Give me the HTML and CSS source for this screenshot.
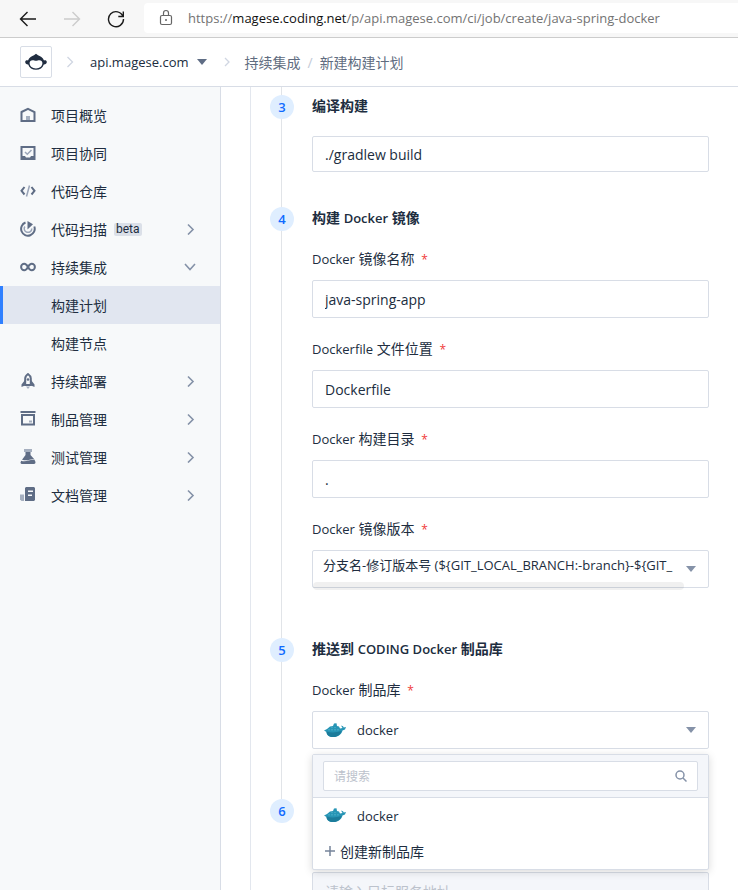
FILE: index.html
```html
<!DOCTYPE html>
<html lang="zh-CN">
<head>
    <meta charset="UTF-8">
    <meta name="viewport" content="width=device-width, initial-scale=1.0">
    <title>新建构建计划</title>

    <link rel="stylesheet" href="styles.css">
</head>
<body>

    <div class="browser-bar">
        <button class="browser-btn" aria-label="后退">
            <svg width="18" height="18" viewBox="0 0 18 18"><path d="M17 9H1.500M8.500 2L1.500 9l7 7"/></svg>
        </button>
        <button class="browser-btn forward" aria-label="前进" disabled>
            <svg width="18" height="18" viewBox="0 0 18 18"><path d="M1 9h15.500M9.500 2l7 7-7 7"/></svg>
        </button>
        <button class="browser-btn reload" aria-label="刷新">
            <svg width="18" height="18" viewBox="0 0 18 18"><path d="M16 6.500A7.500 7.500 0 1 0 16.500 9M16.300 1.500v5h-5"/></svg>
        </button>
        <div class="address">
            <svg width="14" height="18" viewBox="0 0 14 18"><rect x="1.500" y="6.500" width="11" height="9" rx="1.500"/><path d="M4.500 6.500V4a2.500 2.500 0 0 1 5 0v2.500"/><circle class="dot" cx="7" cy="11" r="1"/></svg>
            <span class="url">https://<b>magese.coding.net</b>/p/api.magese.com/ci/job/create/java-spring-docker</span>
        </div>
    </div>

    <header class="top-nav">
        <a href="#" class="logo" aria-label="CODING">
            <svg width="24" height="18" viewBox="0 0 24 18">
                <path class="logo-dark" d="M4 7.500C5 4.500 8 3.200 10 2.300L12 .8l2 1.500c2 .9 5 2.200 6 5.200 1.500-.5 2.800.2 2.800 1.500 0 1.600-1.300 2.600-3 2.500-1 3.500-4 5.300-7.800 5.300S5.200 15 4.200 11.500c-1.700.1-3-.9-3-2.500 0-1.300 1.300-2 2.800-1.500z"/>
                <path class="logo-light" d="M5.600 10c0-1.700 1.200-2.800 3-2.800 1.300 0 2.200.6 3.400.6s2.100-.6 3.400-.6c1.800 0 3 1.100 3 2.800 0 3.300-2.800 5.400-6.400 5.400S5.600 13.300 5.600 10z"/>
            </svg>
        </a>
        <svg class="crumb-arrow" width="8" height="12" viewBox="0 0 8 12"><path d="M1.500 1l5 5-5 5"/></svg>
        <button class="project-btn">api.magese.com
            <svg width="10" height="6" viewBox="0 0 10 6"><path d="M0 0h10L5 6z"/></svg>
        </button>
        <svg class="crumb-arrow second" width="6" height="10" viewBox="0 0 6 10"><path d="M1 1l4 4-4 4"/></svg>
        <nav class="crumbs">
            <a href="#">持续集成</a><i>/</i><a href="#">新建构建计划</a>
        </nav>
    </header>

    <div class="page">
        <nav class="sidebar">
            <a href="#" class="menu-item">
                <svg class="icon" viewBox="0 0 16 16"><path class="line" d="M1.500 5L8 1.800 14.500 5v9h-13z"/><path class="pale" d="M6 9h4v4H6z"/></svg>
                项目概览
            </a>
            <a href="#" class="menu-item">
                <svg class="icon" viewBox="0 0 16 16"><path class="line" d="M1.500 2h13v12h-13z"/><path d="M1 11h4l1 1.500h4l1-1.500h4v4H1z"/><path class="line thin" d="M5 7l2.300 2.300L11.500 5"/></svg>
                项目协同
            </a>
            <a href="#" class="menu-item">
                <svg class="icon" viewBox="0 0 16 16"><path class="line" d="M4.500 4L1.500 7.800l3 3.700M11.500 4l3 3.800-3 3.700"/><path class="line thin" d="M9.500 2.500l-3 11"/></svg>
                代码仓库
            </a>
            <a href="#" class="menu-item">
                <svg class="icon" viewBox="0 0 16 16"><path class="line" d="M5.500 1.500A6.800 6.800 0 1 0 14.300 5.500"/><path class="line thin" d="M4.800 5.500a3.800 3.800 0 1 0 7 2"/><path d="M7.500 0L13 3.200 7.500 8.500z"/></svg>
                代码扫描 <span class="beta">beta</span>
                <svg class="arrow" viewBox="0 0 12 12"><path d="M4 1.500L9 6.500l-5 5"/></svg>
            </a>
            <a href="#" class="menu-item">
                <svg class="icon" viewBox="0 0 16 16"><path class="line" d="M8 8C6.800 5.800 5.800 4.800 4.300 4.800a3.200 3.200 0 0 0 0 6.400C5.800 11.200 6.800 10.200 8 8s2.200-3.200 3.700-3.200a3.200 3.200 0 0 1 0 6.400C10.200 11.200 9.200 10.200 8 8z"/></svg>
                持续集成
                <svg class="arrow open" viewBox="0 0 12 12"><path d="M1 3l5 5.500L11 3"/></svg>
            </a>
            <a href="#" class="menu-item sub active">构建计划</a>
            <a href="#" class="menu-item sub">构建节点</a>
            <a href="#" class="menu-item">
                <svg class="icon" viewBox="0 0 16 16"><path class="line" d="M5.200 12V5.500C5.200 3.500 6.500 2 8 1c1.500 1 2.800 2.500 2.800 4.500V12z"/><path d="M5 7l-3.500 4.500V14L5 12.500zM11 7l3.500 4.500V14L11 12.500z"/><circle cx="8" cy="6.500" r="1.300"/><path class="pale" d="M6 13.500h4L8 16z"/></svg>
                持续部署
                <svg class="arrow" viewBox="0 0 12 12"><path d="M4 1.500L9 6.500l-5 5"/></svg>
            </a>
            <a href="#" class="menu-item">
                <svg class="icon" viewBox="0 0 16 16"><path d="M.5 0h15v2H.5z"/><path class="line" d="M2 4h12v9.500H2z"/><path class="pale" d="M9 9.500h3v2H9z"/></svg>
                制品管理
                <svg class="arrow" viewBox="0 0 12 12"><path d="M4 1.500L9 6.500l-5 5"/></svg>
            </a>
            <a href="#" class="menu-item">
                <svg class="icon" viewBox="0 0 16 16"><path class="pale" d="M4 0h8v3H4z"/><path d="M5.500 3h5v3l4 4.500c-4-1.200-6 2-12.500.2L5.500 6z"/><path d="M1.200 11.800c5 1.700 8-1.500 13.300-1l1 2.200c0 1.200-.5 2-1.500 2H2.500C1.500 15 .5 14.500.5 13.500z"/></svg>
                测试管理
                <svg class="arrow" viewBox="0 0 12 12"><path d="M4 1.500L9 6.500l-5 5"/></svg>
            </a>
            <a href="#" class="menu-item">
                <svg class="icon" viewBox="0 0 16 16"><path class="pale" d="M0 7.500h4V14H1.500L0 12.500z"/><path fill-rule="evenodd" d="M6 0h8l1 1v12l-1 1H5V1zM8 3.500V5h5V3.500zM8 7.500V9h4V7.500z"/></svg>
                文档管理
                <svg class="arrow" viewBox="0 0 12 12"><path d="M4 1.500L9 6.500l-5 5"/></svg>
            </a>
        </nav>

        <main class="content">
            <form class="steps">
                <section class="step">
                    <span class="num">3</span>
                    <h3>编译构建</h3>
                    <div class="field">
                        <input type="text" class="command" aria-label="编译构建" value="./gradlew build">
                    </div>
                </section>

                <section class="step">
                    <span class="num">4</span>
                    <h3>构建 <span class="en">Docker</span> 镜像</h3>
                    <div class="field">
                        <label for="imageName"><span class="en">Docker</span> 镜像名称 <em>*</em></label>
                        <input type="text" id="imageName" value="java-spring-app">
                    </div>
                    <div class="field">
                        <label for="dockerfile"><span class="en">Dockerfile</span> 文件位置 <em>*</em></label>
                        <input type="text" id="dockerfile" value="Dockerfile">
                    </div>
                    <div class="field">
                        <label for="buildDir"><span class="en">Docker</span> 构建目录 <em>*</em></label>
                        <input type="text" id="buildDir" value=".">
                    </div>
                    <div class="field">
                        <label for="version"><span class="en">Docker</span> 镜像版本 <em>*</em></label>
                        <div class="select-box scroll">
                            <select id="version">
                                <option>分支名-修订版本号 (${GIT_LOCAL_BRANCH:-branch}-${GIT_</option>
                            </select>
                            <svg class="caret" viewBox="0 0 10 6"><path d="M0 0h10L5 6z"/></svg>
                        </div>
                    </div>
                </section>

                <section class="step">
                    <span class="num">5</span>
                    <h3>推送到 <span class="en">CODING Docker</span> 制品库</h3>
                    <div class="field">
                        <label for="repo"><span class="en">Docker</span> 制品库 <em>*</em></label>
                        <div class="select-box">
                            <button type="button" id="repo" class="repo-btn" aria-haspopup="listbox" aria-expanded="true">
                                <svg class="whale" viewBox="0 0 22 15"><use href="#whale"/></svg>
                                docker
                            </button>
                            <svg class="caret" viewBox="0 0 10 6"><path d="M0 0h10L5 6z"/></svg>
                            <div class="dropdown">
                                <div class="search">
                                    <input type="text" placeholder="请搜索" aria-label="请搜索">
                                    <svg width="12" height="12" viewBox="0 0 12 12"><circle cx="5" cy="5" r="4"/><path d="M8 8l3.500 3.500"/></svg>
                                </div>
                                <button type="button" class="option">
                                    <svg class="whale" viewBox="0 0 22 15"><use href="#whale"/></svg>
                                    docker
                                </button>
                                <button type="button" class="option create">
                                    <svg class="plus" viewBox="0 0 12 12"><path d="M6 1v10M1 6h10"/></svg>
                                    创建新制品库
                                </button>
                            </div>
                        </div>
                    </div>
                </section>

                <section class="step covered">
                    <span class="num">6</span>
                    <div class="field">
                        <input type="text" aria-label="目标服务地址" placeholder="请输入目标服务地址" disabled>
                    </div>
                </section>
            </form>
        </main>
    </div>

    <svg class="defs" width="0" height="0">
        <symbol id="whale" viewBox="0 0 22 15">
            <path fill="#2795b5" d="M0 7.500l3-1.500 3-2.500 3-.5 1-2.500 2.500-.3L13 3l2 .5 1 2 2.500-.5L17 2.500l2 .8.800 1.200 2.200-.5-1 2.500-2.500 1C17.500 11.500 14 14 9.500 14 5 14 2.500 12 2.500 9z"/>
            <path fill="#1c7c9b" d="M2.500 8.500c5 1.500 10 1 15-.5-1 3.500-4 6-8 6-4.500 0-7-2-7-5.500z"/>
            <path fill="#3fa6c2" d="M4 6h2v1.500H4zM7 6h2v1.500H7zM10 6h2v1.500h-2zM7 4h2v1H7zM10 4h2v1h-2zM13 6h2v1.500h-2z"/>
        </symbol>
    </svg>

</body>
</html>
```
FILE: styles.css
```css
* {
    box-sizing: border-box;
}

body {
    margin: 0;
    height: 100vh;
    display: flex;
    flex-direction: column;
    overflow: hidden;
    background-color: #fff;
    color: #202d40;
    font-family: "Open Sans", "Noto Sans CJK SC", sans-serif;
    font-size: 14px;
}

a {
    color: inherit;
    text-decoration: none;
}

button, input, select {
    font-family: inherit;
    font-size: 14px;
    color: inherit;
}

button {
    border: none;
    padding: 0;
    background: none;
}

svg {
    flex: none;
}

.defs {
    position: absolute;
}

/* browser */
.browser-bar {
    flex: none;
    display: flex;
    align-items: center;
    height: 38px;
    padding-left: 19px;
    background-color: #f7f7f7;
    border-bottom: 1px solid #ccc;
}

.browser-btn {
    display: flex;
    margin-right: 26px;
}

.browser-btn.reload {
    margin-right: 19px;
}

.browser-btn svg, .address svg {
    fill: none;
    stroke: #1b1b1b;
    stroke-width: 1.4;
}

.browser-btn.forward svg {
    stroke: #ccc;
}

.address {
    flex: 1;
    display: flex;
    align-items: center;
    gap: 15px;
    height: 30px;
    padding-left: 15px;
    margin-bottom: 1px;
    background-color: #fff;
    border-radius: 4px 0 0 4px;
}

.address svg {
    stroke: #666;
    stroke-width: 1.2;
}

.address .dot {
    fill: #666;
    stroke: none;
}

.url {
    font-size: 13px;
    color: #737373;
    white-space: nowrap;
}

.url b {
    font-weight: normal;
    color: #111;
}

/* top nav */
.top-nav {
    flex: none;
    display: flex;
    align-items: center;
    height: 49px;
    padding-left: 20px;
    border-bottom: 1px solid #d8dde6;
}

.logo {
    display: flex;
    align-items: center;
    justify-content: center;
    width: 32px;
    height: 32px;
    border: 1px solid #d8dde6;
    border-radius: 2px;
}

.logo-dark {
    fill: #202d40;
}

.logo-light {
    fill: #fff;
}

.crumb-arrow {
    margin: 0 16px 0 14px;
    fill: none;
    stroke: #d0d6e2;
    stroke-width: 1.3;
}

.crumb-arrow.second {
    margin: 0 14px 0 17px;
}

.project-btn {
    display: flex;
    align-items: center;
    gap: 9px;
    font-size: 13px;
}

.project-btn svg {
    fill: #5f6d85;
}

.crumbs {
    color: #606c80;
}

.crumbs i {
    margin: 0 7px;
    font-style: normal;
    color: #c4cbd8;
}

.page {
    flex: 1;
    display: flex;
    min-height: 0;
}

/* sidebar */
.sidebar {
    flex: none;
    width: 221px;
    padding-top: 9px;
    background-color: #f7f9fa;
    border-right: 1px solid #d8dde6;
}

.menu-item {
    display: flex;
    align-items: center;
    height: 38px;
    padding: 0 24px 0 20px;
}

.menu-item.sub {
    padding-left: 51px;
}

.menu-item.active {
    padding-left: 48px;
    border-left: 3px solid #2f80ff;
    background-color: #e1e6f0;
}

.icon {
    width: 16px;
    height: 16px;
    margin-right: 15px;
    fill: #5f6d85;
}

.icon .line {
    fill: none;
    stroke: #5f6d85;
    stroke-width: 2;
}

.icon .thin {
    stroke: #9aa5b8;
    stroke-width: 1.5;
}

.icon .pale {
    fill: #a5afbf;
}

.beta {
    margin-left: 7px;
    padding: 0 2px;
    border-radius: 2px;
    background-color: #dbe0e8;
    font-family: Roboto, sans-serif;
    font-size: 12px;
    line-height: 13px;
}

.arrow {
    width: 12px;
    height: 12px;
    margin-left: auto;
    fill: none;
    stroke: #8592a8;
    stroke-width: 1.6;
}

/* steps */
.content {
    flex: 1;
    min-width: 0;
    padding-left: 29px;
    overflow: hidden;
}

.steps {
    padding: 7px 29px 0 19px;
    border-left: 1px solid #e3e7ee;
    background: linear-gradient(#e1e4e8, #e1e4e8) 30px 0 / 1px 712px no-repeat;
}

.step {
    position: relative;
    padding: 0 0 34px 42px;
}

.num {
    position: absolute;
    left: 0;
    top: 1px;
    width: 24px;
    height: 24px;
    border-radius: 50%;
    background-color: #dfeeff;
    color: #0f6bff;
    font-size: 13px;
    font-weight: 600;
    line-height: 24px;
    text-align: center;
}

.step h3 {
    margin: 0 0 18px;
    font-size: 14px;
    font-weight: 600;
    line-height: 24px;
}

.en {
    font-size: 13px;
}

.field {
    margin-bottom: 20px;
}

.field:last-child {
    margin-bottom: 15px;
}

.step:first-child .field {
    margin-bottom: 0;
}

.step.covered {
    padding-top: 74px;
}

.field label {
    display: block;
    height: 22px;
    margin-bottom: 10px;
    line-height: 22px;
}

.field em {
    margin-left: 3px;
    font-size: 12px;
    font-style: normal;
    color: #f03a3a;
}

.field input {
    display: block;
    width: 100%;
    height: 38px;
    padding: 0 12px;
    border: 1px solid #d8dde6;
    border-radius: 2px;
    outline: 0;
    background-color: #fff;
}

.field .command {
    height: 36px;
}

.field input:disabled {
    background-color: #f4f6fa;
}

.field input::placeholder {
    color: #bcc2cc;
}

.select-box {
    position: relative;
    height: 38px;
    border: 1px solid #d8dde6;
    border-radius: 2px;
}

.select-box select {
    display: block;
    width: calc(100% - 24px);
    height: 36px;
    padding: 0 0 8px 10px;
    border: none;
    outline: 0;
    appearance: none;
    background: none;
    font-size: 13px;
}

.scroll::after {
    content: "";
    position: absolute;
    left: 0;
    right: 24px;
    bottom: -3px;
    height: 8px;
    border-radius: 4px;
    background-color: rgba(0, 0, 0, 0.06);
}

.caret {
    position: absolute;
    top: 15px;
    right: 12px;
    width: 10px;
    height: 6px;
    fill: #8592a8;
}

.repo-btn, .option {
    display: flex;
    align-items: center;
    width: 100%;
    height: 36px;
    padding-left: 11px;
    font-size: 13px;
}

.option {
    height: 35px;
}

.whale {
    width: 22px;
    height: 15px;
    margin-right: 11px;
}

.dropdown {
    position: absolute;
    z-index: 1;
    top: 42px;
    left: -1px;
    right: -1px;
    padding-bottom: 1px;
    border: 1px solid #d8dde6;
    border-radius: 2px;
    background-color: #fff;
    box-shadow: 0 2px 8px rgba(0, 0, 0, 0.15);
}

.search {
    display: flex;
    align-items: center;
    padding: 6px 10px;
    border-bottom: 1px solid #d8dde6;
    background-color: #f4f6fa;
}

.search input {
    height: 30px;
    padding: 0 30px 0 10px;
    font-size: 12px;
}

.search svg {
    margin-left: -23px;
    fill: none;
    stroke: #8592a8;
    stroke-width: 1.5;
}

.create {
    font-size: 14px;
}

.plus {
    width: 12px;
    height: 12px;
    margin-right: 4px;
    fill: none;
    stroke: #76849b;
    stroke-width: 1.5;
}
```
